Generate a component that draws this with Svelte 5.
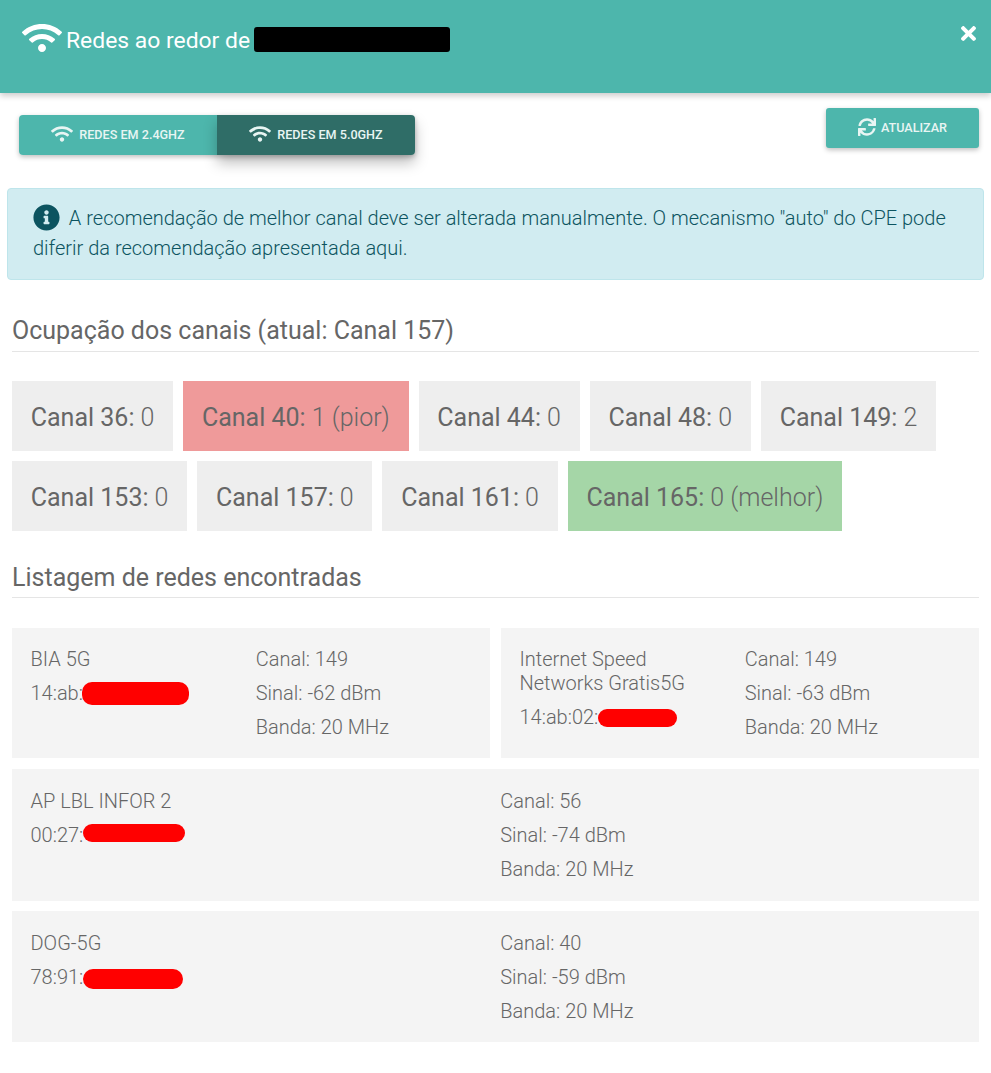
<script>
  const wifi = 'M634.91 154.88C457.74-8.99 182.19-8.93 5.09 154.88c-6.66 6.16-6.79 16.59-.35 22.98l34.24 33.97c6.14 6.1 16.02 6.23 22.4.38 145.92-133.68 371.3-133.71 517.25 0 6.38 5.85 16.26 5.71 22.4-.38l34.24-33.97c6.43-6.39 6.3-16.82-.36-22.98zM320 352c-35.35 0-64 28.65-64 64s28.65 64 64 64 64-28.65 64-64-28.65-64-64-64zm202.67-83.59c-115.26-101.93-290.21-101.82-405.34 0-6.9 6.1-7.12 16.69-.57 23.15l34.44 33.99c6 5.92 15.66 6.32 22.05.8 83.95-72.57 209.74-72.41 293.49 0 6.39 5.52 16.05 5.13 22.05-.8l34.44-33.99c6.56-6.46 6.33-17.06-.56-23.15z';

  const channels = [
    [
      { name: 'Canal 36:', value: '0' },
      { name: 'Canal 40:', value: '1 (pior)', kind: 'worst' },
      { name: 'Canal 44:', value: '0' },
      { name: 'Canal 48:', value: '0' },
      { name: 'Canal 149:', value: '2' },
    ],
    [
      { name: 'Canal 153:', value: '0' },
      { name: 'Canal 157:', value: '0' },
      { name: 'Canal 161:', value: '0' },
      { name: 'Canal 165:', value: '0 (melhor)', kind: 'best' },
    ],
  ];

  // redact: the hand-painted mark over the end of each MAC address
  const networks = [
    [
      { ssid: 'BIA 5G', mac: '14:ab:', redact: { w: 107, h: 23, drop: 5 }, canal: 149, sinal: -62 },
      { ssid: 'Internet Speed Networks Gratis5G', mac: '14:ab:02:', redact: { w: 79, h: 18, drop: 3 }, canal: 149, sinal: -63 },
    ],
    [{ ssid: 'AP LBL INFOR 2', mac: '00:27:', redact: { w: 102, h: 18, drop: 0 }, canal: 56, sinal: -74 }],
    [{ ssid: 'DOG-5G', mac: '78:91:', redact: { w: 100, h: 20, drop: 5 }, canal: 40, sinal: -59 }],
  ];
</script>

<header class="header">
  <div class="title">
    <svg class="title-icon" viewBox="0 0 640 512"><path d={wifi} /></svg>
    <span class="title-text">Redes ao redor de</span>
    <span class="black-bar"></span>
  </div>
  <svg class="close" viewBox="0 0 352 512"><path d="M242.72 256l100.07-100.07c12.28-12.28 12.28-32.19 0-44.48l-22.24-22.24c-12.28-12.28-32.19-12.28-44.48 0L176 189.28 75.93 89.21c-12.28-12.28-32.19-12.28-44.48 0L9.21 111.45c-12.28 12.28-12.28 32.19 0 44.48L109.28 256 9.21 356.07c-12.28 12.28-12.28 32.19 0 44.48l22.24 22.24c12.28 12.28 32.2 12.28 44.48 0L176 322.72l100.07 100.07c12.28 12.28 32.2 12.28 44.48 0l22.24-22.24c12.28-12.28 12.28-32.19 0-44.48L242.72 256z" /></svg>
</header>

<div class="toolbar">
  <div class="tabs">
    <button class="tab">
      <svg viewBox="0 0 640 512"><path d={wifi} /></svg>
      Redes em 2.4GHz
    </button>
    <button class="tab active">
      <svg viewBox="0 0 640 512"><path d={wifi} /></svg>
      Redes em 5.0GHz
    </button>
  </div>
  <button class="refresh">
    <svg viewBox="0 0 512 512"><path d="M440.65 12.57l4 82.77A247.16 247.16 0 0 0 255.83 8C134.73 8 33.91 94.92 12.29 209.82A12 12 0 0 0 24.09 224h49.05a12 12 0 0 0 11.67-9.26 175.91 175.91 0 0 1 317-56.94l-101.46-4.86a12 12 0 0 0-12.57 12v47.41a12 12 0 0 0 12 12H500a12 12 0 0 0 12-12V12a12 12 0 0 0-12-12h-47.37a12 12 0 0 0-11.98 12.57zM255.83 432a175.61 175.61 0 0 1-146-77.8l101.8 4.87a12 12 0 0 0 12.57-12v-47.4a12 12 0 0 0-12-12H12a12 12 0 0 0-12 12V500a12 12 0 0 0 12 12h47.35a12 12 0 0 0 12-12.6l-4.15-82.57A247.17 247.17 0 0 0 255.83 504c121.11 0 221.93-86.92 243.55-201.82a12 12 0 0 0-11.8-14.18h-49.05a12 12 0 0 0-11.67 9.26A175.86 175.86 0 0 1 255.83 432z" /></svg>
    Atualizar
  </button>
</div>

<div class="alert">
  <svg class="alert-icon" viewBox="0 0 512 512"><path d="M256 8C119.043 8 8 119.083 8 256c0 136.997 111.043 248 248 248s248-111.003 248-248C504 119.083 392.957 8 256 8zm0 110c23.196 0 42 18.804 42 42s-18.804 42-42 42-42-18.804-42-42 18.804-42 42-42zm56 254c0 6.627-5.373 12-12 12h-88c-6.627 0-12-5.373-12-12v-24c0-6.627 5.373-12 12-12h12v-64h-12c-6.627 0-12-5.373-12-12v-24c0-6.627 5.373-12 12-12h64c6.627 0 12 5.373 12 12v100h12c6.627 0 12 5.373 12 12v24z" /></svg>
  A recomendação de melhor canal deve ser alterada manualmente. O mecanismo "auto" do CPE pode diferir da recomendação apresentada aqui.
</div>

<section class="content">
  <h2 class="section-title">Ocupação dos canais (atual: Canal 157)</h2>
  <div class="channels">
    {#each channels as row}
      <div class="channel-row">
        {#each row as c}
          <div class="chip {c.kind ?? ''}"><b>{c.name}</b> {c.value}</div>
        {/each}
      </div>
    {/each}
  </div>

  <h2 class="section-title list-title">Listagem de redes encontradas</h2>
  <div class="networks">
    {#each networks as row}
      <div class="net-row">
        {#each row as n}
          <div class="net">
            <div class="net-id">
              <div class="ssid">{n.ssid}</div>
              <div class="line mac">{n.mac}<span class="redact" style="width: {n.redact.w}px; height: {n.redact.h}px; vertical-align: {-n.redact.drop}px"></span></div>
            </div>
            <div class="net-info">
              <div class="line">Canal: {n.canal}</div>
              <div class="line">Sinal: {n.sinal} dBm</div>
              <div class="line">Banda: 20 MHz</div>
            </div>
          </div>
        {/each}
      </div>
    {/each}
  </div>
</section>

<style>
  :global(body) {
    font-family: Roboto, "Liberation Sans", sans-serif;
    color: #666;
    background: #fff;
  }

  svg {
    fill: currentColor;
    display: block;
    flex: none;
  }

  .header {
    height: 93px;
    background: #4db6ac;
    color: #fff;
    display: flex;
    justify-content: space-between;
    align-items: flex-start;
    padding: 22px 15px 0 22px;
    box-sizing: border-box;
    box-shadow: 0 3px 6px rgba(0, 0, 0, 0.2);
    position: relative;
  }

  .title {
    display: flex;
    align-items: center;
    gap: 4px;
    font-size: 22.9px;
    line-height: 34px;
    height: 34px;
  }

  .title-icon {
    width: 40px;
    height: 32px;
    margin-top: -3px;
  }

  .title-text {
    margin-top: 3px;
  }

  .black-bar {
    width: 196px;
    height: 25px;
    margin-top: 1px;
    background: #000;
    border-radius: 3px;
  }

  .close {
    width: 15px;
    height: 23px;
  }

  .toolbar {
    display: flex;
    justify-content: space-between;
    align-items: flex-start;
    padding: 15px 12px 0 19px;
    height: 95px;
    box-sizing: border-box;
  }

  .tabs {
    display: flex;
    margin-top: 7px;
    border-radius: 4px;
    box-shadow: 0 2px 5px rgba(0, 0, 0, 0.25);
  }

  .tab,
  .refresh {
    font-family: inherit;
    border: 0;
    color: #e8f5f3;
    background: #4db6ac;
    font-size: 12.6px;
    font-weight: 500;
    text-transform: uppercase;
    display: flex;
    align-items: center;
    justify-content: center;
    gap: 6px;
    height: 40px;
    padding: 0 0 2px;
  }

  .tab {
    width: 198px;
  }

  .tab:first-child {
    border-radius: 4px 0 0 4px;
  }

  .tab svg {
    width: 22px;
    height: 18px;
  }

  .tab.active {
    background: #2f6d67;
    border-radius: 0 4px 4px 0;
    box-shadow: 0 8px 14px rgba(0, 0, 0, 0.25);
  }

  .refresh {
    width: 153px;
    border-radius: 3px;
    box-shadow: 0 2px 5px rgba(0, 0, 0, 0.25);
  }

  .refresh svg {
    width: 18px;
    height: 18px;
    margin-right: -1px;
  }

  .alert {
    margin: 0 7px;
    padding: 14px 25px;
    min-height: 92px;
    box-sizing: border-box;
    background: #d1ecf1;
    border: 1px solid #bee5eb;
    border-radius: 4px;
    color: #0c5460;
    font-size: 20px;
    font-weight: 300;
    line-height: 30px;
  }

  .alert-icon {
    display: inline-block;
    width: 27px;
    height: 27px;
    vertical-align: -6px;
    margin-right: 4px;
  }

  .content {
    padding: 0 12px;
  }

  .section-title {
    margin: 36px 0 29px;
    padding-bottom: 5px;
    border-bottom: 1px solid #e5e5e5;
    font-size: 25px;
    line-height: 30px;
    font-weight: 400;
    color: #666;
  }

  .list-title {
    margin-top: 32px;
    margin-bottom: 30px;
    padding-bottom: 4px;
  }

  .channels {
    display: flex;
    flex-direction: column;
    gap: 10px;
  }

  .channel-row {
    display: flex;
    gap: 10px;
  }

  .chip {
    height: 70px;
    box-sizing: border-box;
    padding: 2px 18.75px 0;
    background: #eee;
    font-size: 25px;
    line-height: 70px;
    font-weight: 300;
    color: #666;
  }

  .chip b {
    font-weight: 400;
  }

  .chip.worst {
    background: #ef9a9a;
  }

  .chip.best {
    background: #a5d6a7;
  }

  .networks {
    display: flex;
    flex-direction: column;
    gap: 10px;
  }

  .net-row {
    display: flex;
    gap: 11px;
  }

  .net-row:first-child {
    margin-bottom: 1px;
  }

  .net {
    flex: 1 1 0;
    display: flex;
    background: #f4f4f4;
    padding: 15px 19px 14px 18.5px;
    font-size: 20px;
    font-weight: 300;
    color: #666;
  }

  .net-row:first-child .net {
    padding-top: 14px;
    padding-bottom: 14px;
  }

  .net-row:nth-child(2) .net {
    padding-bottom: 15px;
  }

  .net-id {
    flex: 1 1 0;
    padding-right: 10px;
  }

  .net-info {
    flex: 1 1 0;
  }

  .line {
    line-height: 34px;
  }

  .ssid {
    line-height: 24px;
    padding: 5px 0;
  }

  .mac {
    white-space: nowrap;
  }

  .redact {
    display: inline-block;
    margin-left: -0.5px;
    background: #f00;
    border-radius: 10px;
  }
</style>
